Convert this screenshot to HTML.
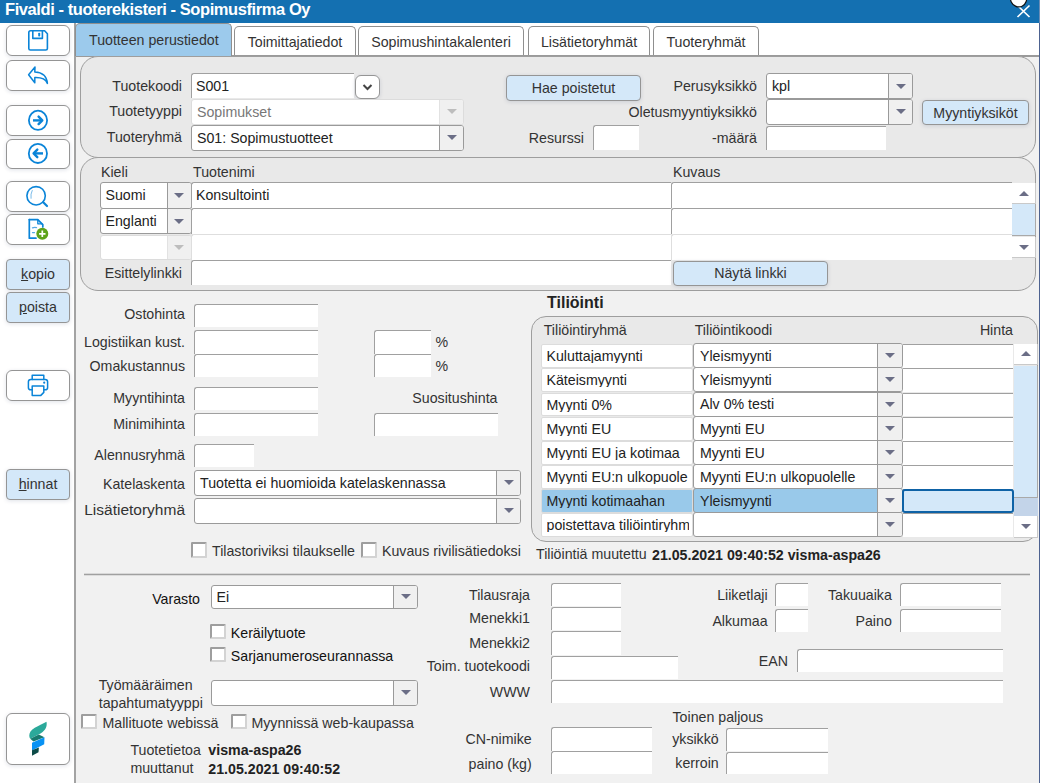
<!DOCTYPE html><html><head><meta charset="utf-8"><title>Fivaldi</title><style>
*{box-sizing:border-box}
html,body{margin:0;padding:0}
body{width:1040px;height:783px;overflow:hidden;position:relative;background:#fff;font-family:"Liberation Sans",sans-serif;font-size:14.2px;line-height:14px;color:#333}
div{position:absolute}
.t{white-space:nowrap}
.i{background:#fff;border-top:1px solid #a0a0a0;border-left:1px solid #a0a0a0;border-top-left-radius:3px;color:#222;overflow:hidden;white-space:nowrap}
.s{background:#fff;border:1px solid #9a9a9a;border-radius:3px;color:#222;white-space:nowrap;overflow:hidden}
.s .a{right:0;top:0;bottom:0;background:#f0f0f0;border-left:1px solid #9a9a9a}
.s .a:after{content:"";position:absolute;left:50%;top:50%;margin-left:-5px;margin-top:-2.5px;border-left:5px solid transparent;border-right:5px solid transparent;border-top:5px solid #6b6e86}
.s.dis{border-color:#dcdcdc;color:#777}
.s.dis .a{border-left-color:#e2e2e2}
.s.dis .a:after{border-top-color:#bdbdbd}
.b{background:#fff;border:1px solid #959595;border-radius:6px;box-shadow:0 1px 4px rgba(0,30,80,.13);color:#333}
.b.blue{background:#d4e8f9;border-radius:4px}
.cb{background:#fff;border:2px solid #d3d3d3;border-top-color:#9e9e9e;border-left-color:#9e9e9e;border-radius:1.5px}
.pan{border:1px solid #9e9e9e;border-radius:18px;background:#e9e9e9}
.tab{background:#fff;border:1px solid #8f8f8f;border-bottom:none;border-radius:5px 5px 0 0;color:#333}
svg{position:absolute;left:0;top:0}
</style></head><body>
<div class="" style="left:0.0px;top:0.0px;width:1039.0px;height:23.0px;background:#1470b1"></div>
<div class="" style="left:1039.0px;top:0.0px;width:1.0px;height:23.0px;background:#6a8db6"></div>
<div class="t" style="left:5px;top:1px;font-size:16.5px;line-height:16.5px;font-weight:bold;letter-spacing:-0.42px;color:#fff">Fivaldi - tuoterekisteri - Sopimusfirma Oy</div>
<svg style="left:1015px;top:3px" width="18" height="16" viewBox="0 0 18 16"><path d="M2.5 2.5 L14.5 14 M14.5 2.5 L2.5 14" stroke="#fff" stroke-width="1.7"/></svg>
<svg style="left:1006px;top:-10px" width="26" height="20" viewBox="0 0 26 20"><ellipse cx="12.5" cy="8.5" rx="8" ry="8.5" transform="rotate(-25 12.5 8.5)" fill="#fff" stroke="#111" stroke-width="1.2"/></svg>
<div class="" style="left:74.0px;top:23.0px;width:2.0px;height:760.0px;background:#a3a3a3"></div>
<div class="b" style="left:6.0px;top:25.0px;width:64.0px;height:30.5px;"><!--save--></div>
<div class="b" style="left:6.0px;top:60.0px;width:64.0px;height:30.5px;"><!--undo--></div>
<div class="b" style="left:6.0px;top:105.0px;width:64.0px;height:30.5px;"><!--next--></div>
<div class="b" style="left:6.0px;top:138.5px;width:64.0px;height:30.5px;"><!--prev--></div>
<div class="b" style="left:6.0px;top:181.0px;width:64.0px;height:30.5px;"><!--search--></div>
<div class="b" style="left:6.0px;top:214.0px;width:64.0px;height:30.5px;"><!--add--></div>
<div class="b blue" style="left:6.0px;top:259.0px;width:64.0px;height:30.5px;"><span style="position:absolute;left:0;right:0;text-align:center;top:7px"><u>k</u>opio</span></div>
<div class="b blue" style="left:6.0px;top:292.0px;width:64.0px;height:30.5px;"><span style="position:absolute;left:0;right:0;text-align:center;top:7px"><u>p</u>oista</span></div>
<div class="b" style="left:6.0px;top:370.0px;width:64.0px;height:30.5px;"><!--print--></div>
<div class="b blue" style="left:6.0px;top:469.0px;width:64.0px;height:30.5px;"><span style="position:absolute;left:0;right:0;text-align:center;top:7px"><u>h</u>innat</span></div>
<div class="b" style="left:6.0px;top:713.0px;width:64.0px;height:51.5px;"><!--logo--></div>
<svg width="76" height="783" viewBox="0 0 76 783" style="left:0;top:0;z-index:5"><g fill="none" stroke="#0a84d8" stroke-width="1.6" stroke-linejoin="round" stroke-linecap="round"><path d="M30.6 30.8 H44.6 L47.4 33.8 V48.4 Q47.4 50 45.8 50 H30.4 Q28.8 50 28.8 48.4 V32.6 Q28.8 30.8 30.6 30.8 Z"/><path d="M32.8 31 V38.4 H42.4 V31"/><path d="M35 66.9 L28.6 74.7 L34.8 82.8 L34.8 77.6 C40.5 77.4 45.5 78.5 47.4 83.4 C46.8 76.5 42.5 72.3 34.8 72 Z" stroke-width="1.5"/><ellipse cx="38" cy="120.3" rx="9.1" ry="9.6" stroke-width="1.8"/><path d="M33 120.4 H42" stroke-width="2.4" stroke-linecap="butt"/><path d="M38.6 116.6 L42.3 120.4 L38.6 124.1" stroke-width="2.4"/><ellipse cx="37.9" cy="153.4" rx="9.1" ry="9.6" stroke-width="1.8"/><path d="M34 153.4 H43" stroke-width="2.4" stroke-linecap="butt"/><path d="M37.3 149.6 L33.6 153.4 L37.3 157.2" stroke-width="2.4"/><circle cx="36.1" cy="195.8" r="9.2" stroke-width="1.6"/><path d="M43.2 202.3 L47 206" stroke-width="2.2"/><path d="M32.2 190.5 Q30.4 194 31 198.3" stroke-width="1" stroke-opacity=".55"/><path d="M29.3 219.6 H37.8 L42.8 224.6 V227" stroke-width="1.7"/><path d="M29.3 219.6 V238.2 H36" stroke-width="1.7"/><path d="M37.8 220 V223.8 H42" stroke-width="1.3"/><path d="M32.5 227.8 Q34.5 227 36.5 227.6 M32.5 232.6 H34.5" stroke-width="1.3" stroke-opacity=".7"/><path d="M32.2 379.5 V375.2 H43.8 V379.5" stroke-width="1.5"/><path d="M32.2 389.8 H30.8 Q28.4 389.8 28.4 387.4 V381.8 Q28.4 379.4 30.8 379.4 H45.2 Q47.6 379.4 47.6 381.8 V387.4 Q47.6 389.8 45.2 389.8 H43.8" stroke-width="1.5"/><path d="M32.2 386 H43.8 V392.4 L40.6 395.6 H32.2 Z" stroke-width="1.5"/></g><rect x="38.2" y="32.8" width="2" height="3.8" rx=".8" fill="#0a84d8"/><circle cx="44.2" cy="382.7" r="1.1" fill="#0a84d8"/><circle cx="42.3" cy="233.8" r="6" fill="#5da31a"/><path d="M42.3 230.6 V237 M39.1 233.8 H45.5" stroke="#fff" stroke-width="1.7"/><path d="M46.5 721.8 C47.3 726.5 46 730 40.5 733.5 L30.2 738.8 C29 737 28.9 734 30.5 731.5 C32.5 728.5 36.5 726.8 41 724.5 Z" fill="#2ba99a"/><path d="M30.2 738.8 L38.8 734.6 L44.4 737.2 L33.5 741.6 Z" fill="#177a6e"/><path d="M32 742.8 L44.5 737.3 L44.2 744.3 L32 750.4 Z" fill="#0892f4"/><path d="M32 750.3 L38.9 747.6 L38.5 752.2 L32 755.8 Z" fill="#0d4b48"/></svg>
<div class="" style="left:76.0px;top:23.0px;width:963.0px;height:33.0px;background:#fff"></div>
<div class="" style="left:76.0px;top:56.0px;width:963.0px;height:727.0px;background:#f1f1f1"></div>
<div class="" style="left:76.0px;top:55.0px;width:963.0px;height:1.5px;background:#9a9a9a"></div>
<div class="" style="left:1039.0px;top:23.0px;width:1.0px;height:760.0px;background:#4d6290"></div>
<div class="tab" style="left:75.0px;top:23.0px;width:157.0px;height:33.0px;background:#9ccaec"><span style="position:absolute;left:13px;top:9px">Tuotteen perustiedot</span></div>
<div class="tab" style="left:234.0px;top:26.0px;width:122.0px;height:29.0px;"><span style="position:absolute;left:0;right:0;text-align:center;top:8px">Toimittajatiedot</span></div>
<div class="tab" style="left:358.0px;top:26.0px;width:166.0px;height:29.0px;"><span style="position:absolute;left:0;right:0;text-align:center;top:8px">Sopimushintakalenteri</span></div>
<div class="tab" style="left:528.0px;top:26.0px;width:122.0px;height:29.0px;"><span style="position:absolute;left:0;right:0;text-align:center;top:8px">Lisätietoryhmät</span></div>
<div class="tab" style="left:653.0px;top:26.0px;width:106.0px;height:29.0px;"><span style="position:absolute;left:0;right:0;text-align:center;top:8px">Tuoteryhmät</span></div>
<div class="pan" style="left:80.0px;top:56.0px;width:956.0px;height:101.5px;"></div>
<div class="t " style="top:79px;right:858.0px;">Tuotekoodi</div>
<div class="t " style="top:104px;right:858.0px;">Tuotetyyppi</div>
<div class="t " style="top:130px;right:858.0px;">Tuoteryhmä</div>
<div class="i" style="left:191.0px;top:73.0px;width:163.0px;height:25.0px;"><span style="position:absolute;left:4px;top:4.5px">S001</span></div>
<div class="b" style="left:355.0px;top:75.0px;width:25.0px;height:24.0px;"><svg width="23" height="22" viewBox="0 0 23 22"><path d="M7.5 9 L11.5 13 L15.5 9" fill="none" stroke="#444" stroke-width="2"/></svg></div>
<div class="s dis" style="left:191.0px;top:98.7px;width:273.0px;height:25.9px;"><span style="position:absolute;left:5px;top:4.9px">Sopimukset</span><div class="a" style="width:24px"></div></div>
<div class="s" style="left:191.0px;top:124.7px;width:273.0px;height:26.4px;"><span style="position:absolute;left:5px;top:5.2px">S01: Sopimustuotteet</span><div class="a" style="width:24px"></div></div>
<div class="b blue" style="left:506.0px;top:75.0px;width:135.0px;height:26.0px;"><span style="position:absolute;left:0;right:0;text-align:center;top:5px">Hae poistetut</span></div>
<div class="t " style="top:79px;right:283.0px;">Perusyksikkö</div>
<div class="s" style="left:766.0px;top:73.0px;width:147.0px;height:26.1px;"><span style="position:absolute;left:5px;top:5.0px">kpl</span><div class="a" style="width:24px"></div></div>
<div class="t " style="top:105px;right:283.0px;">Oletusmyyntiyksikkö</div>
<div class="s" style="left:766.0px;top:98.7px;width:147.0px;height:26.4px;"><div class="a" style="width:24px"></div></div>
<div class="b blue" style="left:922.0px;top:99.5px;width:107.0px;height:25.5px;"><span style="position:absolute;left:0;right:0;text-align:center;top:5px">Myyntiyksiköt</span></div>
<div class="t " style="top:131px;right:456.0px;">Resurssi</div>
<div class="i" style="left:593.0px;top:125.0px;width:46.0px;height:25.0px;"></div>
<div class="t " style="top:131px;right:283.0px;">-määrä</div>
<div class="i" style="left:766.0px;top:126.0px;width:120.0px;height:24.0px;"></div>
<div class="pan" style="left:80.0px;top:157.0px;width:956.0px;height:134.0px;"></div>
<div class="t " style="top:165px;left:101.0px;">Kieli</div>
<div class="t " style="top:165px;left:193.0px;">Tuotenimi</div>
<div class="t " style="top:165px;left:673.0px;">Kuvaus</div>
<div class="s" style="left:99.5px;top:181.7px;width:92.0px;height:26.9px;"><span style="position:absolute;left:5px;top:5.5px">Suomi</span><div class="a" style="width:24px"></div></div>
<div class="s" style="left:99.5px;top:208.2px;width:92.0px;height:25.9px;"><span style="position:absolute;left:5px;top:5.0px">Englanti</span><div class="a" style="width:24px"></div></div>
<div class="s dis" style="left:99.5px;top:234.7px;width:92.0px;height:24.9px;"><div class="a" style="width:24px"></div></div>
<div class="i" style="left:191.0px;top:182.0px;width:480.0px;height:26.0px;"><span style="position:absolute;left:4px;top:5.0px">Konsultointi</span></div>
<div class="i" style="left:191.0px;top:208.0px;width:480.0px;height:26.0px;"></div>
<div class="i" style="left:191.0px;top:234.0px;width:480.0px;height:26.0px;border-color:#dedede"></div>
<div class="i" style="left:671.0px;top:182.0px;width:341.0px;height:26.0px;"></div>
<div class="i" style="left:671.0px;top:208.0px;width:341.0px;height:26.0px;"></div>
<div class="i" style="left:671.0px;top:234.0px;width:341.0px;height:26.0px;border-color:#dedede"></div>
<div class="t " style="top:266px;right:858.0px;">Esittelylinkki</div>
<div class="i" style="left:191.0px;top:260.0px;width:480.0px;height:25.0px;"></div>
<div class="b blue" style="left:673.0px;top:260.5px;width:155.0px;height:25.0px;"><span style="position:absolute;left:0;right:0;text-align:center;top:4px">Näytä linkki</span></div>
<div class="" style="left:1012.4px;top:182.5px;width:23.6px;height:21.0px;background:#fff;border-right:1px solid #c9c9c9;border-bottom:1px solid #c9c9c9"><div style="left:6.3px;top:8.0px;width:0;height:0;border-left:5px solid transparent;border-right:5px solid transparent;border-bottom:5.2px solid #6b6e86"></div></div>
<div class="" style="left:1012.4px;top:204.3px;width:23.6px;height:32.0px;background:#d4e8f9;border-right:1px solid #a9a9a9;border-bottom:1px solid #a9a9a9"></div>
<div class="" style="left:1012.4px;top:237.0px;width:23.6px;height:21.0px;background:#fff;border-right:1px solid #c9c9c9;border-bottom:1px solid #c9c9c9"><div style="left:6.3px;top:8.0px;width:0;height:0;border-left:5px solid transparent;border-right:5px solid transparent;border-top:5.2px solid #6b6e86"></div></div>
<div class="t " style="top:307px;right:855.0px;">Ostohinta</div>
<div class="i" style="left:194.0px;top:304.0px;width:124.0px;height:23.0px;"></div>
<div class="t " style="top:335px;right:855.0px;">Logistiikan kust.</div>
<div class="i" style="left:194.0px;top:330.0px;width:124.0px;height:24.0px;"></div>
<div class="i" style="left:374.0px;top:330.0px;width:57.0px;height:23.5px;"></div>
<div class="t " style="top:335px;left:435.5px;">%</div>
<div class="t " style="top:359px;right:855.0px;">Omakustannus</div>
<div class="i" style="left:194.0px;top:354.0px;width:124.0px;height:23.0px;"></div>
<div class="i" style="left:374.0px;top:354.0px;width:57.0px;height:23.3px;"></div>
<div class="t " style="top:359px;left:435.5px;">%</div>
<div class="t " style="top:391px;right:855.0px;">Myyntihinta</div>
<div class="i" style="left:194.0px;top:387.0px;width:124.0px;height:23.0px;"></div>
<div class="t " style="top:391px;right:542.5px;">Suositushinta</div>
<div class="t " style="top:417px;right:855.0px;">Minimihinta</div>
<div class="i" style="left:194.0px;top:413.0px;width:124.0px;height:23.0px;"></div>
<div class="i" style="left:374.0px;top:413.0px;width:124.0px;height:23.0px;"></div>
<div class="t " style="top:448px;right:855.0px;">Alennusryhmä</div>
<div class="i" style="left:194.0px;top:444.0px;width:60.0px;height:23.0px;"></div>
<div class="t " style="top:477px;right:855.0px;">Katelaskenta</div>
<div class="s" style="left:194.0px;top:469.7px;width:327.0px;height:26.4px;"><span style="position:absolute;left:5px;top:5.2px">Tuotetta ei huomioida katelaskennassa</span><div class="a" style="width:24px"></div></div>
<div class="t " style="top:502px;right:855.0px;font-size:15.5px;line-height:15.5px;">Lisätietoryhmä</div>
<div class="s" style="left:194.0px;top:497.7px;width:327.0px;height:26.4px;"><div class="a" style="width:24px"></div></div>
<div class="cb" style="left:191.0px;top:542.0px;width:15.5px;height:15.5px;"></div>
<div class="t " style="top:544px;left:212.0px;">Tilastoriviksi tilaukselle</div>
<div class="cb" style="left:361.0px;top:542.0px;width:15.5px;height:15.5px;"></div>
<div class="t " style="top:544px;left:382.0px;">Kuvaus rivilisätiedoksi</div>
<div class="t " style="top:295px;left:547.0px;font-size:16px;line-height:16px;font-weight:bold;color:#222;">Tiliöinti</div>
<div class="pan" style="left:531.0px;top:316.0px;width:507.0px;height:225.5px;border-radius:15px"></div>
<div class="t " style="top:323px;left:543.7px;">Tiliöintiryhmä</div>
<div class="t " style="top:323px;left:694.7px;">Tiliöintikoodi</div>
<div class="t " style="top:323px;right:27.0px;">Hinta</div>
<div class="" style="left:541.0px;top:344.0px;width:151.5px;height:23.7px;background:#fff;border:1px solid #dcdcdc;border-radius:2px;overflow:hidden;white-space:nowrap;color:#222;padding-right:4px;width:151.5px"><span style="position:absolute;left:4.5px;top:4px;width:142px;overflow:hidden">Kuluttajamyynti</span></div>
<div class="s" style="left:693.0px;top:343.2px;width:209.5px;height:25.1px;"><span style="position:absolute;left:6px;top:4.6px">Yleismyynti</span><div class="a" style="width:25px"></div></div>
<div class="i" style="left:903.0px;top:344.0px;width:110.0px;height:23.7px;border-left:none;border-radius:0"></div>
<div class="" style="left:541.0px;top:368.0px;width:151.5px;height:23.7px;background:#fff;border:1px solid #dcdcdc;border-radius:2px;overflow:hidden;white-space:nowrap;color:#222;padding-right:4px;width:151.5px"><span style="position:absolute;left:4.5px;top:4px;width:142px;overflow:hidden">Käteismyynti</span></div>
<div class="s" style="left:693.0px;top:367.2px;width:209.5px;height:25.1px;"><span style="position:absolute;left:6px;top:4.6px">Yleismyynti</span><div class="a" style="width:25px"></div></div>
<div class="i" style="left:903.0px;top:368.0px;width:110.0px;height:23.7px;border-left:none;border-radius:0"></div>
<div class="" style="left:541.0px;top:392.5px;width:151.5px;height:23.7px;background:#fff;border:1px solid #dcdcdc;border-radius:2px;overflow:hidden;white-space:nowrap;color:#222;padding-right:4px;width:151.5px"><span style="position:absolute;left:4.5px;top:4px;width:142px;overflow:hidden">Myynti 0%</span></div>
<div class="s" style="left:693.0px;top:391.7px;width:209.5px;height:25.1px;"><span style="position:absolute;left:6px;top:4.6px">Alv 0% testi</span><div class="a" style="width:25px"></div></div>
<div class="i" style="left:903.0px;top:392.5px;width:110.0px;height:23.7px;border-left:none;border-radius:0"></div>
<div class="" style="left:541.0px;top:417.0px;width:151.5px;height:23.7px;background:#fff;border:1px solid #dcdcdc;border-radius:2px;overflow:hidden;white-space:nowrap;color:#222;padding-right:4px;width:151.5px"><span style="position:absolute;left:4.5px;top:4px;width:142px;overflow:hidden">Myynti EU</span></div>
<div class="s" style="left:693.0px;top:416.2px;width:209.5px;height:25.1px;"><span style="position:absolute;left:6px;top:4.6px">Myynti EU</span><div class="a" style="width:25px"></div></div>
<div class="i" style="left:903.0px;top:417.0px;width:110.0px;height:23.7px;border-left:none;border-radius:0"></div>
<div class="" style="left:541.0px;top:441.0px;width:151.5px;height:23.7px;background:#fff;border:1px solid #dcdcdc;border-radius:2px;overflow:hidden;white-space:nowrap;color:#222;padding-right:4px;width:151.5px"><span style="position:absolute;left:4.5px;top:4px;width:142px;overflow:hidden">Myynti EU ja kotimaa</span></div>
<div class="s" style="left:693.0px;top:440.2px;width:209.5px;height:25.1px;"><span style="position:absolute;left:6px;top:4.6px">Myynti EU</span><div class="a" style="width:25px"></div></div>
<div class="i" style="left:903.0px;top:441.0px;width:110.0px;height:23.7px;border-left:none;border-radius:0"></div>
<div class="" style="left:541.0px;top:465.0px;width:151.5px;height:23.7px;background:#fff;border:1px solid #dcdcdc;border-radius:2px;overflow:hidden;white-space:nowrap;color:#222;padding-right:4px;width:151.5px"><span style="position:absolute;left:4.5px;top:4px;width:142px;overflow:hidden">Myynti EU:n ulkopuole</span></div>
<div class="s" style="left:693.0px;top:464.2px;width:209.5px;height:25.1px;"><span style="position:absolute;left:6px;top:4.6px">Myynti EU:n ulkopuolelle</span><div class="a" style="width:25px"></div></div>
<div class="i" style="left:903.0px;top:465.0px;width:110.0px;height:23.7px;border-left:none;border-radius:0"></div>
<div class="" style="left:541.0px;top:489.0px;width:151.5px;height:23.7px;background:#99c9ea;border:1px solid #dcdcdc;border-radius:2px;overflow:hidden;white-space:nowrap;color:#222;padding-right:4px;width:151.5px"><span style="position:absolute;left:4.5px;top:4px;width:142px;overflow:hidden">Myynti kotimaahan</span></div>
<div class="s" style="left:693.0px;top:488.2px;width:209.5px;height:25.1px;background:#99c9ea;"><span style="position:absolute;left:6px;top:4.6px">Yleismyynti</span><div class="a" style="width:25px"></div></div>
<div class="i" style="left:903.0px;top:489.0px;width:110.0px;height:23.7px;border-left:none;border-radius:0"></div>
<div class="" style="left:541.0px;top:513.0px;width:151.5px;height:23.7px;background:#fff;border:1px solid #dcdcdc;border-radius:2px;overflow:hidden;white-space:nowrap;color:#222;padding-right:4px;width:151.5px"><span style="position:absolute;left:4.5px;top:4px;width:142px;overflow:hidden">poistettava tiliöintiryhm</span></div>
<div class="s" style="left:693.0px;top:512.2px;width:209.5px;height:25.1px;"><div class="a" style="width:25px"></div></div>
<div class="i" style="left:903.0px;top:513.0px;width:110.0px;height:23.7px;border-left:none;border-radius:0"></div>
<div class="" style="left:902.3px;top:489.2px;width:111.5px;height:23.8px;background:#d4e8f9;border:2px solid #0e62a6;border-radius:3px"></div>
<div class="" style="left:1014.3px;top:344.3px;width:23.7px;height:20.7px;background:#fff;border-right:1px solid #c9c9c9;border-bottom:1px solid #c9c9c9"><div style="left:6.4px;top:7.0px;width:0;height:0;border-left:5px solid transparent;border-right:5px solid transparent;border-bottom:5.2px solid #6b6e86"></div></div>
<div class="" style="left:1014.3px;top:365.7px;width:23.7px;height:132.1px;background:#d4e8f9;border-right:1px solid #a9a9a9;border-bottom:1px solid #a9a9a9"></div>
<div class="" style="left:1014.3px;top:497.8px;width:23.7px;height:18.2px;background:#c3d4e9"></div>
<div class="" style="left:1014.3px;top:516.0px;width:23.7px;height:21.5px;background:#fff;border-right:1px solid #c9c9c9;border-bottom:1px solid #c9c9c9"><div style="left:6.4px;top:8.2px;width:0;height:0;border-left:5px solid transparent;border-right:5px solid transparent;border-top:5.2px solid #6b6e86"></div></div>
<div class="t " style="top:547px;left:536.0px;">Tiliöintiä muutettu</div>
<div class="t " style="top:548px;left:652.0px;font-weight:bold;color:#222;">21.05.2021 09:40:52 visma-aspa26</div>
<div class="" style="left:84.0px;top:573.0px;width:946.0px;height:3.0px;background:#a0a0a0;border-top:1px solid #d8d8d8;border-bottom:1px solid #dcdcdc"></div>
<div class="t " style="top:592px;right:840.0px;color:#111;">Varasto</div>
<div class="s" style="left:210.5px;top:584.6px;width:207.8px;height:24.5px;"><span style="position:absolute;left:5px;top:4.2px">Ei</span><div class="a" style="width:24px"></div></div>
<div class="cb" style="left:210.0px;top:623.9px;width:15.5px;height:15.5px;"></div>
<div class="t " style="top:626px;left:230.8px;color:#111;">Keräilytuote</div>
<div class="cb" style="left:210.0px;top:646.5px;width:15.5px;height:15.5px;"></div>
<div class="t " style="top:649px;left:230.8px;color:#111;">Sarjanumeroseurannassa</div>
<div class="t " style="top:678px;left:98.7px;">Työmääräimen</div>
<div class="t " style="top:696px;left:98.7px;">tapahtumatyyppi</div>
<div class="s" style="left:210.5px;top:679.8px;width:207.8px;height:26.4px;"><div class="a" style="width:24px"></div></div>
<div class="cb" style="left:81.0px;top:713.5px;width:15.5px;height:15.5px;"></div>
<div class="t " style="top:716px;left:102.5px;">Mallituote webissä</div>
<div class="cb" style="left:231.4px;top:713.5px;width:15.5px;height:15.5px;"></div>
<div class="t " style="top:716px;left:251.4px;">Myynnissä web-kaupassa</div>
<div class="t " style="top:743px;left:130.4px;">Tuotetietoa</div>
<div class="t " style="top:761px;left:130.4px;">muuttanut</div>
<div class="t " style="top:743px;left:208.3px;font-weight:bold;color:#222;">visma-aspa26</div>
<div class="t " style="top:762px;left:208.3px;font-weight:bold;color:#222;">21.05.2021 09:40:52</div>
<div class="t " style="top:588px;right:510.0px;">Tilausraja</div>
<div class="i" style="left:551.4px;top:583.0px;width:69.6px;height:23.0px;"></div>
<div class="t " style="top:611px;right:510.0px;">Menekki1</div>
<div class="i" style="left:551.4px;top:607.3px;width:69.6px;height:23.2px;"></div>
<div class="t " style="top:636px;right:510.0px;">Menekki2</div>
<div class="i" style="left:551.4px;top:631.0px;width:69.6px;height:24.0px;"></div>
<div class="t " style="top:659px;right:510.0px;">Toim. tuotekoodi</div>
<div class="i" style="left:551.4px;top:655.8px;width:126.6px;height:23.2px;"></div>
<div class="t " style="top:685px;right:510.0px;">WWW</div>
<div class="i" style="left:551.4px;top:680.0px;width:451.6px;height:23.0px;"></div>
<div class="t " style="top:732px;right:508.3px;">CN-nimike</div>
<div class="i" style="left:551.4px;top:727.0px;width:100.6px;height:23.5px;"></div>
<div class="t " style="top:757px;right:508.3px;">paino (kg)</div>
<div class="i" style="left:551.4px;top:751.4px;width:100.6px;height:23.1px;"></div>
<div class="t " style="top:588px;right:272.4px;">Liiketlaji</div>
<div class="i" style="left:775.0px;top:583.0px;width:33.0px;height:23.2px;"></div>
<div class="t " style="top:614px;right:272.4px;">Alkumaa</div>
<div class="i" style="left:775.0px;top:609.0px;width:33.0px;height:23.0px;"></div>
<div class="t " style="top:588px;right:148.2px;">Takuuaika</div>
<div class="i" style="left:900.0px;top:583.0px;width:101.0px;height:23.2px;"></div>
<div class="t " style="top:614px;right:148.2px;">Paino</div>
<div class="i" style="left:900.0px;top:609.0px;width:101.0px;height:23.0px;"></div>
<div class="t " style="top:654px;right:252.0px;">EAN</div>
<div class="i" style="left:797.0px;top:648.7px;width:206.0px;height:23.3px;"></div>
<div class="t " style="top:710px;left:672.5px;">Toinen paljous</div>
<div class="t " style="top:732px;right:321.3px;">yksikkö</div>
<div class="i" style="left:726.3px;top:727.5px;width:101.7px;height:23.0px;"></div>
<div class="t " style="top:756px;right:321.3px;">kerroin</div>
<div class="i" style="left:726.3px;top:751.5px;width:101.7px;height:22.5px;"></div>
</body></html>
